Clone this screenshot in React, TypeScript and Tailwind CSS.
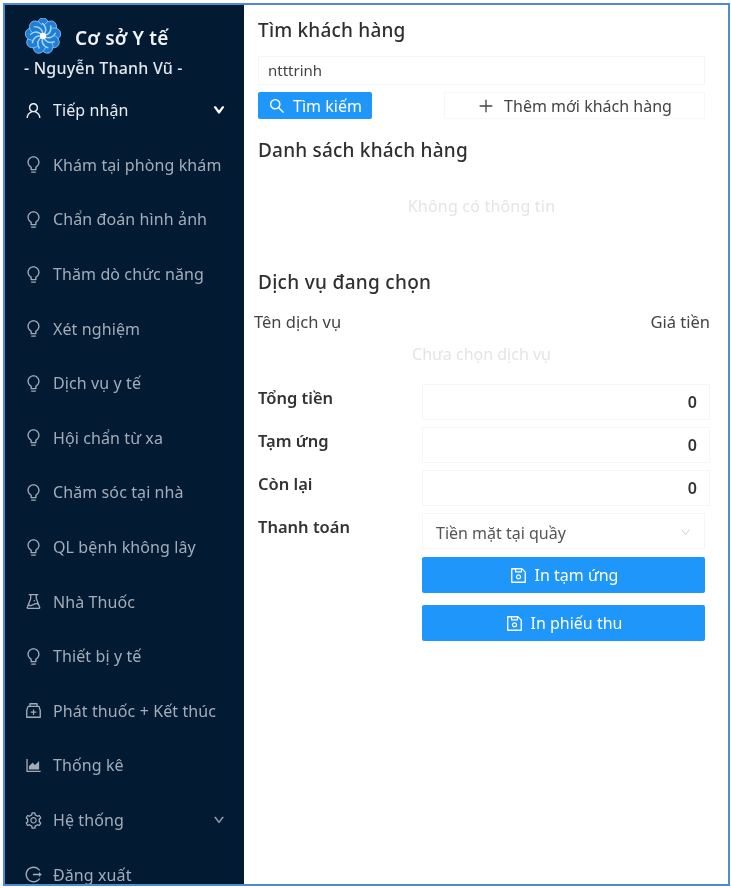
import React from "react";
import {
  AiOutlineAreaChart,
  AiOutlineBulb,
  AiOutlineDown,
  AiOutlineExperiment,
  AiOutlineLogout,
  AiOutlineMedicineBox,
  AiOutlinePlus,
  AiOutlineSave,
  AiOutlineSearch,
  AiOutlineSetting,
  AiOutlineUser,
} from "react-icons/ai";

const FONT = "font-['Noto_Sans','Open_Sans',sans-serif]";

const MENU = [
  { icon: <AiOutlineBulb />, label: "Khám tại phòng khám" },
  { icon: <AiOutlineBulb />, label: "Chẩn đoán hình ảnh" },
  { icon: <AiOutlineBulb />, label: "Thăm dò chức năng" },
  { icon: <AiOutlineBulb />, label: "Xét nghiệm" },
  { icon: <AiOutlineBulb />, label: "Dịch vụ y tế" },
  { icon: <AiOutlineBulb />, label: "Hội chẩn từ xa" },
  { icon: <AiOutlineBulb />, label: "Chăm sóc tại nhà" },
  { icon: <AiOutlineBulb />, label: "QL bệnh không lây" },
  { icon: <AiOutlineExperiment />, label: "Nhà Thuốc" },
  { icon: <AiOutlineBulb />, label: "Thiết bị y tế" },
  { icon: <AiOutlineMedicineBox />, label: "Phát thuốc + Kết thúc" },
  { icon: <AiOutlineAreaChart />, label: "Thống kê" },
];

function Logo() {
  const petals = [0, 40, 80, 120, 160, 200, 240, 280, 320];
  return (
    <svg width="36" height="36" viewBox="0 0 36 36" className="shrink-0">
      {petals.map((a) => (
        <ellipse key={a} cx="18" cy="7.5" rx="6.2" ry="7.5" fill="#1f7fd6" stroke="#8cc4f2" strokeWidth="0.8" transform={`rotate(${a} 18 18)`} />
      ))}
      <circle cx="18" cy="18" r="11" fill="#1f7fd6" />
      {petals.map((a) => (
        <path key={a} d="M18 18 C 22 13 22 9 17 5" fill="none" stroke="#a9d6f7" strokeWidth="1.3" transform={`rotate(${a} 18 18)`} />
      ))}
      <circle cx="18" cy="18" r="3.2" fill="#ffffff" />
    </svg>
  );
}

function MenuRow({ icon, label, arrow, active }: { icon: React.ReactNode; label: string; arrow?: boolean; active?: boolean }) {
  return (
    <div className={`flex h-[54.6px] items-center pr-[19px] pl-[19px] text-[16px] tracking-[0.1px] ${active ? "text-[#e8edf2]" : "text-[#a3adb8]"}`}>
      <span className="mr-[10px] flex w-[19px] justify-center text-[19px]">{icon}</span>
      <span className="flex-1 whitespace-nowrap">{label}</span>
      {arrow && <AiOutlineDown className={`text-[12px] ${active ? "stroke-[120] text-white" : "stroke-[40]"}`} />}
    </div>
  );
}

function MoneyRow({ label }: { label: string }) {
  return (
    <div className="flex h-[43px]">
      <div className="w-[164px] pt-[2px] text-[16.5px] leading-[24px] font-semibold text-[#333]">{label}</div>
      <div className="flex h-[36px] w-[288px] items-center justify-end border border-[#f6f6f6] pr-[12px] text-[16px] font-semibold text-[#333]">0</div>
    </div>
  );
}

function PrintButton({ label, className }: { label: string; className: string }) {
  return (
    <button className={`flex h-[36px] w-[283px] items-center justify-center gap-[7px] rounded-[2px] bg-[#1e96fa] text-[16px] text-white ${className}`}>
      <AiOutlineSave className="text-[19px]" />
      {label}
    </button>
  );
}

export default function App() {
  return (
    <div className={`h-[888px] w-[731px] overflow-hidden bg-white pt-[3px] pl-[3px] blur-[0.4px] ${FONT}`}>
      <div className="flex h-[883px] w-[727px] overflow-hidden border-2 border-[#4f8bd0]">
        <aside className="w-[239px] shrink-0 overflow-hidden bg-[#031a33]">
          <div className="flex items-center pt-[13px] pl-[20px]">
            <Logo />
            <span className="mt-[4px] ml-[14px] text-[19px] leading-[28px] tracking-[0.2px] font-semibold whitespace-nowrap text-[#f0f3f6]">Cơ sở Y tế</span>
          </div>
          <div className="mt-[2px] pl-[19px] text-[16px] leading-[24px] tracking-[0.2px] font-medium whitespace-nowrap text-[#e3e7ec]">- Nguyễn Thanh Vũ -</div>
          <div className="mt-[3px]">
            <MenuRow icon={<AiOutlineUser />} label="Tiếp nhận" arrow active />
            {MENU.map((m) => (
              <MenuRow key={m.label} icon={m.icon} label={m.label} />
            ))}
            <MenuRow icon={<AiOutlineSetting />} label="Hệ thống" arrow />
            <MenuRow icon={<AiOutlineLogout />} label="Đăng xuất" />
          </div>
        </aside>

        <main className="flex-1 pl-[14px] text-[#333]">
          <h2 className="mt-[12px] text-[19px] leading-[27px] tracking-[0.2px] font-medium text-[#2f2f2f]">Tìm khách hàng</h2>
          <div className="mt-[12px] flex h-[29px] w-[447px] items-center border border-[#f6f6f6] pl-[9px] text-[15px] text-[#444]">ntttrinh</div>
          <div className="mt-[7px] flex w-[447px] justify-between">
            <button className="flex h-[27px] w-[114px] items-center justify-center gap-[7px] rounded-[2px] bg-[#1e96fa] text-[16px] text-white">
              <AiOutlineSearch className="text-[18px]" />
              Tìm kiếm
            </button>
            <button className="flex h-[27px] w-[261px] items-center justify-center gap-[9px] border border-[#f7f7f7] text-[16px] text-[#444]">
              <AiOutlinePlus className="text-[18px]" />
              Thêm mới khách hàng
            </button>
          </div>
          <h2 className="mt-[18px] text-[19px] leading-[27px] tracking-[0.2px] font-medium text-[#2f2f2f]">Danh sách khách hàng</h2>
          <div className="mt-[30px] w-[447px] text-center text-[16px] leading-[24px] tracking-[0.2px] text-[#e4e4e4]">Không có thông tin</div>
          <h2 className="mt-[51px] text-[19px] leading-[27px] tracking-[0.3px] font-medium text-[#2f2f2f]">Dịch vụ đang chọn</h2>
          <div className="mt-[14px] -ml-[4px] flex w-[456px] justify-between text-[16.5px] leading-[24px] text-[#444]">
            <span>Tên dịch vụ</span>
            <span>Giá tiền</span>
          </div>
          <div className="mt-[8px] w-[447px] text-center text-[16px] leading-[24px] text-[#e4e4e4]">Chưa chọn dịch vụ</div>
          <div className="mt-[18px]">
            <MoneyRow label="Tổng tiền" />
            <MoneyRow label="Tạm ứng" />
            <MoneyRow label="Còn lại" />
          </div>
          <div className="flex">
            <div className="w-[164px] pt-[2px] text-[16.5px] leading-[24px] font-semibold text-[#333]">Thanh toán</div>
            <div>
              <div className="flex h-[36px] w-[283px] items-center justify-between border border-[#f6f6f6] px-[13px] pt-[3px] text-[16px] text-[#555]">
                Tiền mặt tại quầy
                <AiOutlineDown className="text-[11px] text-[#d5d5d5]" />
              </div>
              <PrintButton label="In tạm ứng" className="mt-[8px]" />
              <PrintButton label="In phiếu thu" className="mt-[12px]" />
            </div>
          </div>
        </main>
      </div>
    </div>
  );
}
